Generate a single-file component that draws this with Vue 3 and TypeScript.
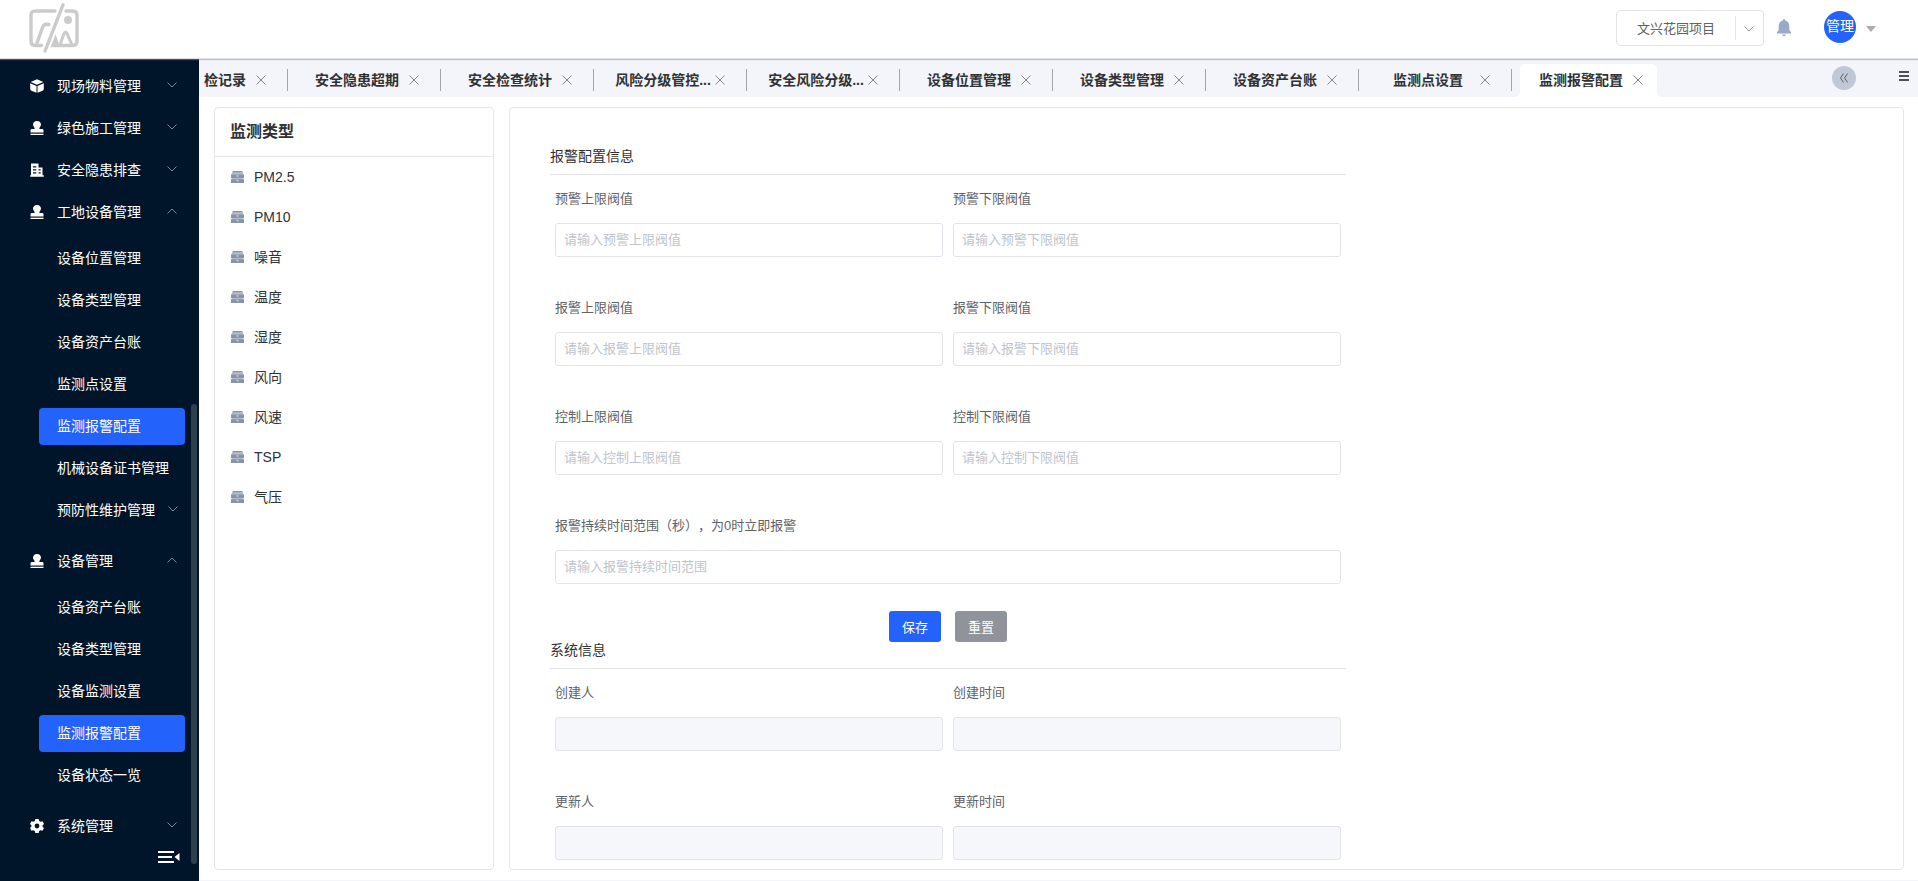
<script setup lang="ts">
import { ref } from 'vue'

interface MenuItem {
  label: string
  active?: boolean
  expandable?: boolean
}

interface MenuGroup {
  label: string
  icon: 'box' | 'stamp' | 'building' | 'gear'
  open?: boolean
  children?: MenuItem[]
}

interface Field {
  id: string
  label: string
  placeholder?: string
  wide?: boolean
}

const menu: MenuGroup[] = [
  { label: '现场物料管理', icon: 'box' },
  { label: '绿色施工管理', icon: 'stamp' },
  { label: '安全隐患排查', icon: 'building' },
  {
    label: '工地设备管理',
    icon: 'stamp',
    open: true,
    children: [
      { label: '设备位置管理' },
      { label: '设备类型管理' },
      { label: '设备资产台账' },
      { label: '监测点设置' },
      { label: '监测报警配置', active: true },
      { label: '机械设备证书管理' },
      { label: '预防性维护管理', expandable: true },
    ],
  },
  {
    label: '设备管理',
    icon: 'stamp',
    open: true,
    children: [
      { label: '设备资产台账' },
      { label: '设备类型管理' },
      { label: '设备监测设置' },
      { label: '监测报警配置', active: true },
      { label: '设备状态一览' },
    ],
  },
  { label: '系统管理', icon: 'gear' },
]

const tabs: string[] = [
  '检记录',
  '安全隐患超期',
  '安全检查统计',
  '风险分级管控...',
  '安全风险分级...',
  '设备位置管理',
  '设备类型管理',
  '设备资产台账',
  '监测点设置',
  '监测报警配置',
]
const activeTab = ref(tabs.length - 1)

const types: string[] = ['PM2.5', 'PM10', '噪音', '温度', '湿度', '风向', '风速', 'TSP', '气压']

const alarmFields: Field[] = [
  { id: 'warn-max', label: '预警上限阀值', placeholder: '请输入预警上限阀值' },
  { id: 'warn-min', label: '预警下限阀值', placeholder: '请输入预警下限阀值' },
  { id: 'alarm-max', label: '报警上限阀值', placeholder: '请输入报警上限阀值' },
  { id: 'alarm-min', label: '报警下限阀值', placeholder: '请输入报警下限阀值' },
  { id: 'control-max', label: '控制上限阀值', placeholder: '请输入控制上限阀值' },
  { id: 'control-min', label: '控制下限阀值', placeholder: '请输入控制下限阀值' },
  {
    id: 'duration',
    label: '报警持续时间范围（秒），为0时立即报警',
    placeholder: '请输入报警持续时间范围',
    wide: true,
  },
]

const systemFields: Field[] = [
  { id: 'creator', label: '创建人' },
  { id: 'created-at', label: '创建时间' },
  { id: 'updater', label: '更新人' },
  { id: 'updated-at', label: '更新时间' },
]
</script>

<template>
  <div class="layout">
    <header class="header">
      <svg class="logo" viewBox="0 0 50 50" fill="none" stroke="#cbcbcb" stroke-width="3.4" stroke-linecap="round">
        <path d="M26 8H6.5Q2 8 2 12.500V38Q2 42.500 6.500 42.500H12.500" />
        <path d="M34 1.800L16 48" />
        <path d="M37 8H43.500Q48 8 48 12.500V38Q48 42.500 43.500 42.500H24L26.500 36L28.500 42" />
        <path d="M8 40L13.500 24.500Q15 20.500 20 21.500" />
        <path d="M31 42L35 30.500Q36.500 28 38 30.500L43 42" stroke-width="3" />
        <circle cx="39" cy="17" r="4" fill="#cbcbcb" stroke="none" />
      </svg>
      <div class="header-tools">
        <div class="project">
          <select class="project-select" aria-label="项目">
            <option>文兴花园项目</option>
          </select>
          <svg class="project-arrow" viewBox="0 0 10 6" fill="none" stroke="#8f949c"><path d="M.5.5L5 5L9.500.5" /></svg>
        </div>
        <button class="plain" type="button" aria-label="消息">
          <svg class="bell" viewBox="0 0 16 18" fill="#9aabc8">
            <path d="M8 0a1.200 1.200 0 0 1 1.200 1.200v.4C12 2.300 13.300 4.500 13.300 7.200V11l1.900 2.600v.9H.8v-.9L2.700 11V7.200C2.700 4.500 4 2.300 6.800 1.600v-.4A1.200 1.200 0 0 1 8 0z" />
            <path d="M5.800 15.600h4.400Q9.600 17.300 8 17.300T5.800 15.600z" />
          </svg>
        </button>
        <button class="plain user" type="button">
          <span class="avatar">管理</span>
          <svg class="caret" viewBox="0 0 10 6" fill="#a9adb4"><path d="M0 0H10L5 6z" /></svg>
        </button>
      </div>
    </header>

    <div class="body">
      <aside class="sidebar">
        <nav>
          <div v-for="(group, g) in menu" :key="g">
            <a class="menu-item" href="#">
              <svg v-if="group.icon === 'box'" class="menu-icon" viewBox="0 0 14 14">
                <path d="M7 .2L13.300 3L7 5.800L.7 3z" fill="#fff" />
                <path d="M.2 4.200L6.500 7V13.800L2 12Q.2 11.300.2 10z" fill="#fff" />
                <path d="M13.800 4.200L7.500 7V13.800L12 12Q13.800 11.300 13.800 10z" fill="#fff" />
              </svg>
              <svg v-else-if="group.icon === 'stamp'" class="menu-icon" viewBox="0 0 14 14" fill="#fff">
                <path d="M7 0C9.400 0 11 1.600 11 3.600C11 5.400 9.300 6.200 9.300 8H12Q13.500 8 13.500 9.400V11.600H.5V9.400Q.5 8 2 8H4.700C4.700 6.200 3 5.400 3 3.600C3 1.600 4.600 0 7 0z" />
                <path d="M.5 12.700h13v1.300H.5z" />
              </svg>
              <svg v-else-if="group.icon === 'building'" class="menu-icon" viewBox="0 0 14 14" fill="#fff" fill-rule="evenodd">
                <path d="M1 .5H8.500V4.500H12.500V12.300H13.800V13.700H.2V12.300H1zM3 3.200V4.500H6.300V3.200zM3 6.200V7.500H6.300V6.200zM3 9.200V10.500H6.300V9.200zM8.500 6.300V7.500H10.700V6.300zM8.500 9.200V10.500H10.700V9.200z" />
              </svg>
              <svg v-else class="menu-icon" viewBox="0 0 14 14" fill="#fff" fill-rule="evenodd">
                <path d="M5.300 0H8.700L9.200 2L10.600 2.800L12.500 2.200L14 5L12.600 6.300V7.700L14 9L12.500 11.800L10.600 11.200L9.200 12L8.700 14H5.300L4.800 12L3.400 11.200L1.500 11.800L0 9L1.400 7.700V6.300L0 5L1.500 2.200L3.400 2.800L4.800 2zM7 4.600A2.400 2.400 0 1 0 7 9.400A2.400 2.400 0 1 0 7 4.600z" />
              </svg>
              <span>{{ group.label }}</span>
              <svg class="chevron" :class="{ up: group.open }" viewBox="0 0 10 6" fill="none"><path d="M.5.5L5 5L9.500.5" /></svg>
            </a>
            <div v-if="group.children" class="submenu">
              <a v-for="(item, i) in group.children" :key="i" class="sub-item" :class="{ active: item.active }" href="#">
                <span>{{ item.label }}</span>
                <svg v-if="item.expandable" class="chevron" viewBox="0 0 10 6" fill="none"><path d="M.5.5L5 5L9.500.5" /></svg>
              </a>
            </div>
          </div>
        </nav>
        <button class="plain collapse" type="button" aria-label="收起菜单">
          <svg viewBox="0 0 22 12" fill="#fff"><path d="M0 0H16V2H0zM0 5H14V7H0zM0 10H16V12H0zM21.500 2V10L16.500 6z" /></svg>
        </button>
        <span class="scroll-thumb"></span>
      </aside>

      <div class="content">
        <div class="tab-bar">
          <div class="tabs">
            <div v-for="(tab, i) in tabs" :key="i" class="tab" :class="{ active: i === activeTab, cut: i === 0 }">
              <div class="tab-inner">
                <button class="plain tab-label" type="button" @click="activeTab = i">{{ tab }}</button>
                <button class="plain tab-close" type="button" :aria-label="'关闭' + tab">
                  <svg viewBox="0 0 10 10" stroke="#80858e"><path d="M.5.5L9.500 9.500M9.500.5L.5 9.500" /></svg>
                </button>
              </div>
            </div>
          </div>
          <button class="plain shift" type="button" aria-label="向左">
            <svg viewBox="0 0 10 10" fill="none" stroke="#5c626e"><path d="M4.500.5L1.500 5L4.500 9.500M8.500.5L5.500 5L8.500 9.500" /></svg>
          </button>
          <button class="plain list-toggle" type="button" aria-label="标签列表">
            <svg viewBox="0 0 10 10" fill="#4d5157"><path d="M0 0H10V2H0zM0 4H10V6H0zM0 8H10V10H0z" /></svg>
          </button>
        </div>

        <main class="main">
          <section class="card types">
            <h2 class="card-title">监测类型</h2>
            <ul class="type-list">
              <li v-for="type in types" :key="type">
                <button class="plain type" type="button">
                  <svg class="type-icon" viewBox="0 0 13 12">
                    <path d="M2 0H11L12.500 3V12H.5V3z" fill="#b4bdc9" />
                    <path d="M2 0H11L11.600 1.200H1.400z" fill="#8793a8" />
                    <path d="M0 3.500H13V7H0zM0 8.200H13V12H0z" fill="#8793a8" />
                    <path d="M5.500 4.600H7.500V5.600H5.500zM5.500 9.200H7.500V10.200H5.500z" fill="#dfe4ea" />
                  </svg>
                  <span>{{ type }}</span>
                </button>
              </li>
            </ul>
          </section>

          <section class="card detail">
            <form class="form" @submit.prevent>
              <h3 class="section-title">报警配置信息</h3>
              <div class="fields">
                <div v-for="field in alarmFields" :key="field.id" class="field" :class="{ wide: field.wide }">
                  <label :for="field.id">{{ field.label }}</label>
                  <input :id="field.id" type="text" :placeholder="field.placeholder" />
                </div>
              </div>
              <div class="actions">
                <button class="btn primary" type="submit">保存</button>
                <button class="btn" type="reset">重置</button>
              </div>
              <h3 class="section-title">系统信息</h3>
              <div class="fields">
                <div v-for="field in systemFields" :key="field.id" class="field">
                  <label :for="field.id">{{ field.label }}</label>
                  <input :id="field.id" type="text" disabled />
                </div>
              </div>
            </form>
          </section>
        </main>
      </div>
    </div>
  </div>
</template>

<style>
body {
  margin: 0;
}
</style>

<style scoped>
.layout {
  display: flex;
  flex-direction: column;
  min-height: 100vh;
  font-family: "Liberation Sans", "Noto Sans CJK SC", sans-serif;
  font-size: 14px;
  color: #303133;
  background: #fff;
  text-spacing-trim: space-all;
}

.layout * {
  box-sizing: border-box;
}

svg {
  display: block;
  flex: none;
}

.plain {
  padding: 0;
  border: 0;
  background: none;
  font: inherit;
  color: inherit;
  cursor: pointer;
}

.header {
  display: flex;
  align-items: center;
  justify-content: space-between;
  height: 59px;
  padding: 0 42px 2px 29px;
  border-bottom: 1px solid #dfe0e4;
  box-shadow: 0 1px 1px rgba(140, 145, 155, 0.5);
  z-index: 1;
}

.logo {
  width: 50px;
  height: 50px;
}

.header-tools {
  display: flex;
  align-items: center;
}

.project {
  position: relative;
  margin-right: 12px;
}

.project::after {
  content: "";
  position: absolute;
  top: 6px;
  right: 28px;
  width: 1px;
  height: 24px;
  background: #e4e7ed;
}

.project-select {
  display: block;
  width: 148px;
  height: 36px;
  padding: 0 36px 0 20px;
  border: 1px solid #e2e4e9;
  border-radius: 4px;
  background: #fff;
  appearance: none;
  font: inherit;
  font-size: 13px;
  color: #606266;
}

.project-arrow {
  position: absolute;
  top: 16px;
  right: 10px;
  width: 10px;
  height: 6px;
}

.bell {
  width: 16px;
  height: 18px;
}

.user {
  display: flex;
  align-items: center;
  gap: 10px;
  margin-left: 32px;
  padding-bottom: 2px;
}

.avatar {
  width: 32px;
  height: 32px;
  border-radius: 50%;
  background: #2362fb;
  color: #fff;
  line-height: 30px;
  text-align: center;
}

.caret {
  width: 10px;
  height: 6px;
  margin-top: 4px;
}

.body {
  display: flex;
  flex: 1;
}

.sidebar {
  position: relative;
  display: flex;
  flex: none;
  flex-direction: column;
  width: 199px;
  padding-top: 9px;
  background: #001529;
  color: #fff;
}

.menu-item,
.sub-item {
  display: flex;
  align-items: center;
  height: 37px;
  margin-bottom: 5px;
  line-height: 20px;
  color: inherit;
  text-decoration: none;
}

.menu-item {
  padding: 0 22px 2px 30px;
}

.menu-icon {
  width: 14px;
  height: 14px;
  margin-right: 13px;
}

.chevron {
  width: 10px;
  height: 6px;
  margin-left: auto;
  margin-bottom: 2px;
  stroke: #7b8793;
}

.chevron.up {
  transform: rotate(180deg);
}

.submenu {
  padding: 4px 14px 4px 39px;
  margin-bottom: 5px;
}

.sub-item {
  padding: 0 7px 2px 18px;
  border-radius: 4px;
}

.sub-item.active {
  background: #2362fb;
}

.collapse {
  align-self: flex-end;
  width: 22px;
  margin: 1px 19px 18px 0;
}

.scroll-thumb {
  position: absolute;
  right: 2px;
  bottom: 17px;
  width: 6px;
  height: 56%;
  border-radius: 3px;
  background: #2d3e4c;
}

.content {
  display: flex;
  flex: 1;
  flex-direction: column;
  min-width: 0;
}

.tab-bar {
  display: flex;
  align-items: center;
  height: 38px;
  padding: 0 9px 0 5px;
  background: #f3f5fa;
}

.tabs {
  display: flex;
  flex: 1;
  height: 38px;
  min-width: 0;
  overflow: hidden;
}

.tab {
  display: flex;
  position: relative;
  flex: none;
  width: 153px;
  padding: 5px 8px 0;
}

.tab::after {
  content: "";
  position: absolute;
  top: 10px;
  right: 0;
  width: 1px;
  height: 22px;
  background: #a3a6ac;
}

.tab.active::after {
  display: none;
}

.tab-inner {
  display: flex;
  position: relative;
  align-items: center;
  width: 137px;
  padding: 0 4px 2px 12px;
}

.tab-label {
  width: 98px;
  height: 20px;
  line-height: 20px;
  font-weight: 600;
  color: #303133;
  text-align: center;
  white-space: nowrap;
}

.tab-close {
  margin-left: 3px;
}

.tab-close svg {
  width: 10px;
  height: 10px;
}

.tab.cut {
  width: 84px;
  padding: 5px 0 0;
}

.tab.cut .tab-inner {
  padding-left: 0;
}

.tab.cut .tab-label {
  width: 42px;
  margin-right: 7px;
}

.tab.active .tab-inner {
  border-radius: 5px 5px 0 0;
  background: #fff;
}

.tab.active .tab-inner::before,
.tab.active .tab-inner::after {
  content: "";
  position: absolute;
  bottom: 0;
  width: 5px;
  height: 5px;
}

.tab.active .tab-inner::before {
  left: -5px;
  background: radial-gradient(circle at 0 0, transparent 5px, #fff 5px);
}

.tab.active .tab-inner::after {
  right: -5px;
  background: radial-gradient(circle at 100% 0, transparent 5px, #fff 5px);
}

.shift {
  display: flex;
  align-items: center;
  justify-content: center;
  width: 24px;
  height: 24px;
  margin-right: 43px;
  border-radius: 50%;
  background: #c0c8d8;
}

.shift svg,
.list-toggle svg {
  width: 10px;
  height: 10px;
}

.list-toggle {
  margin-bottom: 4px;
}

.main {
  display: flex;
  flex: 1;
  gap: 15px;
  padding: 10px 14px 10px 15px;
  border-bottom: 1px solid #f3f5fa;
}

.card {
  border: 1px solid #e4e6ea;
  border-radius: 4px;
}

.types {
  flex: none;
  width: 280px;
}

.card-title {
  height: 49px;
  margin: 0;
  padding: 0 15px;
  border-bottom: 1px solid #e4e6ea;
  font-size: 16px;
  font-weight: 600;
  line-height: 48px;
}

.type-list {
  margin: 0;
  padding: 0;
  list-style: none;
}

.type {
  display: flex;
  align-items: center;
  gap: 10px;
  width: 100%;
  height: 40px;
  padding: 0 16px;
  line-height: 20px;
}

.type-icon {
  width: 13px;
  height: 12px;
}

.detail {
  flex: 1;
  padding: 40px 40px 9px;
}

.form {
  max-width: 796px;
}

.section-title {
  margin: 0;
  padding-bottom: 10px;
  border-bottom: 1px solid #e2e4e8;
  font-size: 14px;
  font-weight: 400;
  line-height: 16px;
}

.fields {
  display: grid;
  grid-template-columns: 1fr 1fr;
  row-gap: 27px;
}

.field {
  padding: 0 5px;
}

.field.wide {
  grid-column: 1 / -1;
}

.field label {
  display: block;
  height: 48px;
  font-size: 13px;
  line-height: 48px;
  color: #606266;
}

.field input {
  display: block;
  width: 100%;
  height: 34px;
  padding: 0 8px 1px;
  border: 1px solid #e2e4e9;
  border-radius: 3px;
  background: #fff;
  font: inherit;
  font-size: 13px;
  color: #606266;
}

.field input::placeholder {
  color: #c0c4cc;
}

.field input:disabled {
  background: #f5f7fa;
}

.actions {
  display: flex;
  justify-content: center;
  gap: 14px;
  margin-top: 27px;
}

.btn {
  width: 52px;
  height: 31px;
  padding: 0;
  border: 0;
  border-radius: 3px;
  background: #909399;
  font: inherit;
  font-size: 13px;
  color: #fff;
}

.btn.primary {
  background: #2362fb;
}
</style>
